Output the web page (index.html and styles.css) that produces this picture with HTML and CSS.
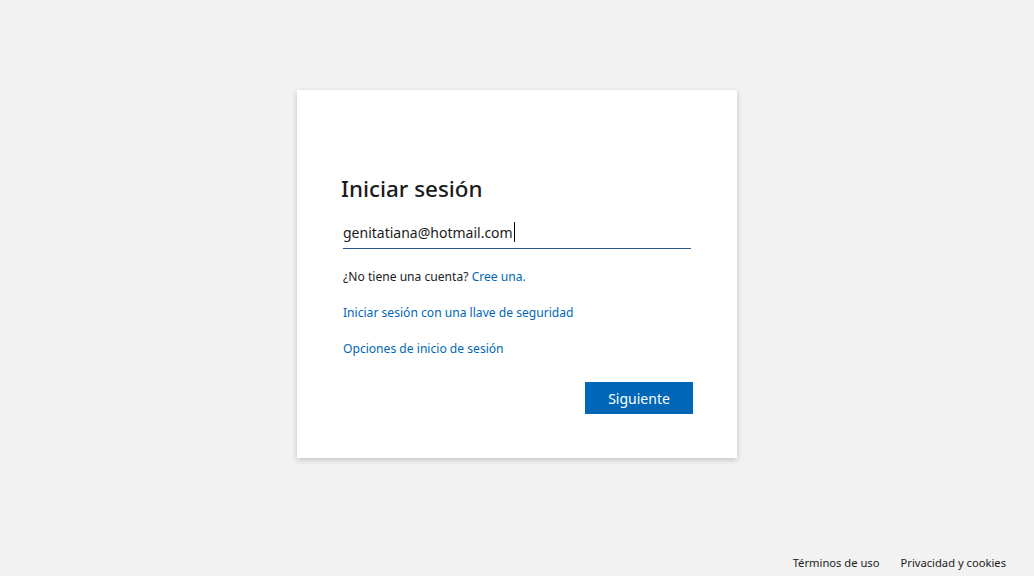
FILE: index.html
```html
<!DOCTYPE html>
<html lang="es">
<head>
<meta charset="utf-8">
<title>Iniciar sesión</title>
<link rel="stylesheet" href="styles.css">
</head>
<body>
<main class="page">
  <section class="card">
    <h1 class="title">Iniciar sesión</h1>
    <div class="field">
      <span class="field-text">genitatiana@hotmail.com</span><span class="caret"></span>
    </div>
    <p class="row">¿No tiene una cuenta? <a class="link" href="#">Cree una.</a></p>
    <p class="row"><a class="link" href="#">Iniciar sesión con una llave de seguridad</a></p>
    <p class="row"><a class="link" href="#">Opciones de inicio de sesión</a></p>
    <div class="actions">
      <button class="btn">Siguiente</button>
    </div>
  </section>
</main>
<footer class="footer">
  <a class="foot-link" href="#">Términos de uso</a>
  <a class="foot-link" href="#">Privacidad y cookies</a>
</footer>
</body>
</html>
```

FILE: styles.css
```css
* { box-sizing: border-box; }
html, body { margin: 0; padding: 0; }
body {
  width: 1034px;
  height: 576px;
  background: #f2f2f2;
  font-family: "Noto Sans", "Open Sans", sans-serif;
  color: #1b1b1b;
  display: flex;
  flex-direction: column;
  overflow: hidden;
}
.page {
  flex: 1;
  display: flex;
  justify-content: center;
  align-items: flex-start;
  padding-top: 90px;
}
.card {
  width: 440px;
  height: 368px;
  background: #fff;
  box-shadow: 0 2px 6px rgba(0,0,0,0.2);
  padding: 84px 44px 0 44px;
}
.title {
  margin: 0;
  font-size: 22.4px;
  line-height: 29px;
  font-weight: 500;
  color: #1b1b1b;
}
.field {
  margin-top: 11px;
  margin-left: 2px;
  width: 348px;
  height: 35px;
  padding-top: 2px;
  border-bottom: 1px solid #2b5a8a;
  display: flex;
  align-items: center;
  font-size: 14px;
  color: #1b1b1b;
}
.caret {
  display: inline-block;
  width: 1px;
  height: 20px;
  background: #000;
  margin-left: 1px;
}
.row {
  margin: 0;
  margin-left: 2px;
  font-size: 12.1px;
  line-height: 16px;
  color: #1b1b1b;
}
.field + .row { margin-top: 20px; }
.row + .row { margin-top: 20px; }
.link { color: #0067b8; text-decoration: none; }
.actions {
  display: flex;
  justify-content: flex-end;
  margin-top: 25px;
}
.btn {
  width: 108px;
  height: 32px;
  border: none;
  background: #0067b8;
  color: #fff;
  font-family: inherit;
  font-size: 14px;
  padding: 0;
}
.footer {
  height: 21px;
  display: flex;
  justify-content: flex-end;
  align-items: flex-start;
  gap: 21px;
  padding-right: 28px;
}
.foot-link {
  color: #1b1b1b;
  text-decoration: none;
  font-size: 11.2px;
  line-height: 16px;
}
```
